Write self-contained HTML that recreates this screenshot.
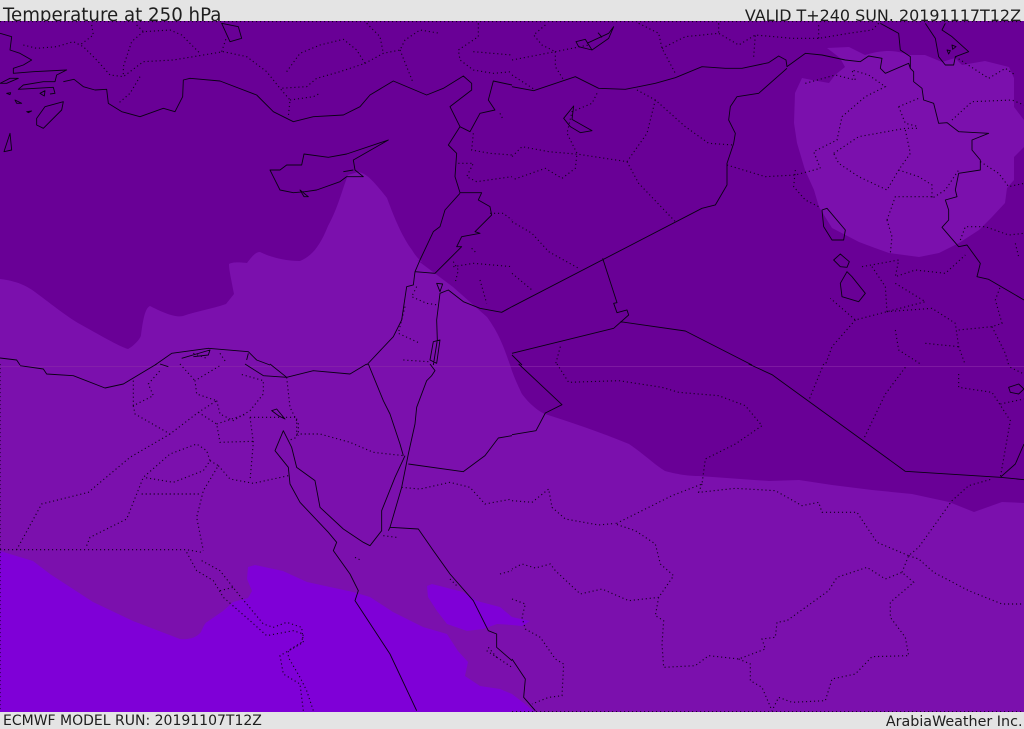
<!DOCTYPE html>
<html><head><meta charset="utf-8"><style>
html,body{margin:0;padding:0;background:#e4e4e4}
#p{position:relative;width:1024px;height:729px;overflow:hidden;background:#e4e4e4;font-family:"DejaVu Sans",sans-serif;color:#1e1e1e}
.t{position:absolute;white-space:nowrap;line-height:1}
svg{position:absolute;left:0;top:21px}
.s{fill:none;stroke:#0a0014;stroke-width:2.7;stroke-linejoin:round}
.d{fill:none;stroke:#14001f;stroke-width:3.4;stroke-dasharray:3.4 8.6;stroke-linecap:butt}
</style></head><body><div id="p">
<div class="t" style="left:3px;top:7px;font-size:18.2px">Temperature at 250 hPa</div>
<div class="t" style="right:3px;top:8px;font-size:15.95px">VALID T+240 SUN. 20191117T12Z</div>
<div class="t" style="left:3px;top:714px;font-size:14px">ECMWF MODEL RUN: 20191107T12Z</div>
<div class="t" style="right:1.500px;top:715px;font-size:14.3px">ArabiaWeather Inc.</div>
<svg width="1024" height="691" viewBox="0 21 1024 691">
<rect x="0" y="21" width="1024" height="691" fill="#7b10ad"/>
<path fill="#690096" d="M0 279C17 281 27 286 35 292C55 307 65 315 78 323C100 335 118 346 128 349C134 346 141 338 141 335C143 320 145 308 150 306C162 312 175 318 183 316C197 311 212 309 226 304L234 294C231 278 229 270 229 264C233 261 247 263 247 263C253 255 256 252 260 252C270 257 285 261 300 261C312 256 320 246 328 226C338 208 342 190 348 175L358 172C367 173 375 183 387 198C395 220 403 238 412 250C420 264 430 265 417 260L453 287L487 317C500 335 505 350 512 371C516 382 522 394 522 394C530 405 540 412 545 414C570 422 600 432 629 444C645 455 655 465 665 471C680 475 690 476 699 476L769 481L799 480L832 485L872 490L912 494L949 502L974 512L1002 502L1024 503V21H0Z"/>
<path fill="#7b10ad" d="M827 48L849 47L865 55C875 52 882 51 889 51C897 51 903 53 910 55L925 55L942 62L955 58L962 65L985 61L1009 67L1014 78L1014 107L1024 120V147L1014 157V180L1007 188L1005 203L992 217L979 230L959 243L939 253L919 257L889 253L875 248L859 242L832 228L819 207L814 190L805 170L797 143L794 123L795 93L802 78L812 80L829 83L835 75L845 67L840 58Z"/>
<path fill="#7f00d7" d="M0 551L33 561L50 574L93 602L133 621L180 639C190 640 197 637 201 632C205 622 207 622 207 622L223 611L233 602L248 598L252 591L247 579L248 567L255 565L283 571L307 582L353 592L370 597L393 612L423 627L447 634L458 651L468 662L465 676L480 686L500 689L512 694L525 704L535 712H0Z"/>
<path fill="#7f00d7" d="M427 586L432 584L463 592L477 601L500 607L512 617L530 621L522 626L512 625L497 624L483 629L467 631L447 624L437 611L428 597Z"/>
<rect x="0" y="366" width="1024" height="1" fill="#8a2aa8" opacity=".6"/>

<!-- top-left quadrant, zoom coordinates -->
<g transform="scale(.33333)">
<path class="d" d="M70 135L110 145L170 140L220 125L250 140L290 180L330 225L370 230L430 185L520 180L580 170L670 155L740 170L800 215L840 265L870 300L865 350M275 75L280 105L240 135M410 75L430 95L510 90L545 105L600 160M430 95L395 125L370 200L370 230M420 230L390 280L355 310M665 155L680 110M860 215L900 160L960 135L1030 118L1070 150L1095 190L1020 215L950 235L920 260L840 265M1095 190L1150 160L1200 150L1215 120L1260 90L1320 100M1200 150L1240 250M1100 70L1140 110L1150 160M870 300L940 290L960 280M1435 70L1435 110L1375 150L1380 180L1420 210L1480 220L1536 215M1420 155L1536 165M1500 340L1510 360M1420 400L1415 450L1470 460L1536 465M1375 490L1420 490L1400 530L1430 545L1536 530M1470 640L1510 640L1536 660M1415 745L1430 760M1360 785L1375 810L1365 850M1360 800L1420 790L1536 800M1440 840L1460 910M1250 860L1235 890L1280 910L1315 915M1215 920L1195 1000L1260 1030M1210 1080L1285 1085M660 1060L680 1090M580 1060L620 1075"/>
<path class="s" d="M0 100L35 110L30 150L60 160L95 180L70 195L40 205L40 220L100 215L200 210L170 225L165 245L130 245L70 255L55 268L160 262L165 280L150 282M0 250L30 235L55 235L20 250ZM20 280L32 278L30 284ZM45 300L65 310L50 310ZM80 335L95 333L85 338ZM120 280L135 272L133 288ZM110 355L135 320L190 305L185 330L130 385L110 375ZM12 455L30 400L35 450ZM190 245L222 238L250 260L285 270L320 268L325 310L365 335L420 350L490 325L525 335L548 290L550 240L570 235L660 243L770 285L820 335L880 365L940 350L1030 345L1080 320L1110 285L1180 243L1280 285L1330 265L1390 228L1415 250L1415 270L1350 320L1380 380L1410 395L1440 340L1485 330L1465 300L1480 243L1536 255M1380 380L1345 435L1370 460L1365 530L1380 578L1445 578L1435 600L1470 620L1475 645L1425 695L1440 700L1385 710L1370 740L1385 740L1345 780L1305 820L1245 815L1240 855L1220 860L1205 960L1180 1010L1100 1095M1380 580L1335 630L1320 680L1300 695L1260 780L1245 815M810 510L840 510L860 495L905 495L912 462L985 472L1040 462L1165 420L1060 480L1065 510L1090 530L1040 530L1020 545L950 570L915 575L880 578L840 570L820 530ZM1030 515L1060 510M900 570L925 590L912 590ZM1536 920L1505 937L1440 925L1390 905L1345 870L1320 880L1310 960L1312 1020L1300 1095M1300 1025L1320 1020L1310 1090L1290 1080ZM1310 850L1328 852L1320 875ZM0 1074L50 1080L60 1095M465 1095L515 1060L625 1045L745 1055L770 1080L810 1095M545 1075L630 1050L625 1065L580 1070M745 1060L740 1080M665 70L715 80L725 115L690 125Z"/>
</g>

<!-- top-right quadrant -->
<g transform="translate(512 0) scale(.33333)">
<path class="d" d="M100 75L65 105L90 135L130 155M0 180L130 155L230 135M130 155L130 200L155 240M380 70L440 100L450 145L490 220M450 145L520 110L620 100L680 135L730 105L840 115L920 115L1010 100L1080 90L1100 70M620 70L620 100M725 170L730 105M920 115L920 70M0 225L70 270M375 270L430 300L520 380L590 430L665 435M430 300L405 400L345 485L200 463L110 455L30 440L0 470M255 280L240 310L180 335L165 400L195 460L190 505L150 535L100 505L0 540M345 485L380 550L490 665M0 665L60 700L110 755L200 805M0 820L60 870M645 495L760 530L850 525L925 505M850 510L845 560L880 600L920 620M880 250L970 225L1030 240L1020 210L1070 225L1120 260L1060 290L990 350L975 420L905 455L925 505M965 460L1040 410L1180 385L1220 385M1180 390L1195 460L1160 510L1125 570L1040 530L980 490L965 460M1160 320L1220 295M1160 320L1180 370L1220 380M1160 510L1220 530L1260 555L1260 595L1300 570L1340 510M1125 660L1150 590L1260 590M1125 660L1140 710L1135 760M1320 360L1380 305L1500 300L1536 315M1330 170L1430 235L1480 205L1510 225M1405 485L1460 520L1490 560L1536 550M1345 720L1360 680L1420 680L1490 705L1536 700M1050 800L1160 780L1150 830L1210 810L1300 820L1360 765M1150 850L1240 905L1125 935L1030 960L955 895M1125 935L1260 925L1330 970L1340 1040L1360 1095M1080 800L1120 860L1125 935M1340 990L1440 980L1470 970L1450 900L1465 860M1440 980L1480 1060L1490 1095M1150 990L1160 1050L1230 1095M1240 1030L1340 1040M1030 960L960 1040L940 1095M145 1040L130 1095M1510 730L1520 770"/>
<path class="s" d="M0 260L65 272L190 230L260 265L340 268L430 250L490 233L570 200L640 205L690 205L770 188L800 168L822 180L825 200L880 160L930 165L1000 180L1045 185L1070 168L1110 175L1105 205L1120 220L1190 190L1195 205L1205 215L1205 245L1230 265L1235 300L1265 310L1280 370L1305 368L1340 395L1430 400L1380 420L1380 450L1405 480L1405 510L1340 520L1330 570L1335 590L1300 600L1310 630L1310 660L1290 682L1340 740L1365 735L1405 790L1395 830L1430 838L1536 900M1105 70L1160 100L1165 150L1195 170L1195 205M1240 70L1270 115L1280 170L1300 195L1325 195L1330 170L1370 155L1320 110L1290 90L1300 70M1305 150L1315 152L1310 162ZM1320 135L1332 140L1322 148ZM825 205L740 280L675 290L655 320L650 360L670 400L665 430L645 490L645 555L610 615L570 625L0 920M0 1060L305 985L350 945L345 930L315 938L305 910L315 908L272 775M325 965L520 993L720 1095M0 1065L30 1095M192 125L220 118L240 150L200 140ZM225 130L290 100L305 80L290 115L240 150M258 98L270 112M185 318L155 355L175 380L205 398L240 392L215 378L180 358ZM930 630L945 625L1000 690L995 720L960 720L935 680ZM965 780L985 762L1012 785L1005 802L985 800ZM1005 815L985 850L990 890L1040 905L1060 880L1020 830Z"/>
</g>

<!-- bottom-left quadrant -->
<g transform="translate(0 364) scale(.33333)">
<path class="d" d="M0 0L0 1040M0 557L560 557L605 565M400 50L400 125L460 95L445 60L480 20M400 125L405 150L510 210L595 145L650 110L590 90L585 50L660 5M540 0L585 50M510 210L390 280L265 385L125 420L50 557M650 110L660 150L700 170L750 140L790 90L790 50L720 30M750 160L890 160L890 220L865 230M750 160L760 235L750 350M890 210L960 210L1050 235L1120 265L1210 275M595 145L650 180L660 235L760 232M650 180L740 150M860 40L870 130L895 180L895 215M260 545L270 520L380 465L430 340L510 270L590 240L620 260L630 290L610 320L520 355L430 340M425 390L600 390M630 290L655 305L610 380L590 460L610 560M655 305L690 345L760 358L865 335M560 565L590 620L640 650L670 700L750 770L800 815L880 800L910 810L905 835L865 860L865 880L900 940L920 980L940 1040M605 590L660 620L715 690L790 780L820 790L860 775L905 790L910 835L840 875L850 930L900 960L910 1040M660 680L700 670M1205 370L1260 375L1350 355L1410 370L1455 420L1536 405M1150 515L1190 520M1065 580L1085 590M1500 630L1536 620M1350 645L1375 670M1460 860L1536 910M1465 850L1490 880"/>
<path class="s" d="M60 5L130 15L140 30L220 35L315 72L370 60L470 0M810 0L860 40M735 0L790 35L860 40L940 20L1050 30L1100 0M1105 0L1150 110L1170 150L1200 240L1210 275M1290 0L1305 20L1295 35L1280 50L1250 130L1245 180L1225 270L1205 370L1170 490L1165 500M1215 275L1185 340L1145 440L1145 500L1110 545L1090 535L1030 495L960 430L945 350L890 310L875 250L850 200L825 260L865 310L870 360L900 415L985 505L1010 535L1000 560L1050 630L1075 680L1065 710L1170 870L1250 1040M1170 490L1255 495L1300 560L1350 630L1420 710L1465 800L1490 810L1490 850L1536 890M1225 300L1390 323L1455 275L1495 222L1536 215M815 140L830 135L855 165L835 155ZM480 0L505 8"/>
</g>

<!-- bottom-right quadrant -->
<g transform="translate(512 364) scale(.33333)">
<path class="d" d="M135 0L170 55L320 50L450 70L500 85L620 95L700 125L750 185L670 240L580 285L570 360L480 395L310 480L370 500L430 540L445 600L485 635L440 700L350 710L270 675L205 690L130 620L115 600L70 612L30 600L0 615M0 410L60 415L110 375L120 430L160 465L260 483L310 478M0 705L40 720L30 760L40 795L85 820L130 885L155 900L150 995L110 1000L60 1020M570 360L560 385L670 373L790 380L870 425L920 415L930 445L1035 445L1095 535L1190 575M440 700L430 755L455 770L450 840L455 910L550 905L590 875L680 885L760 855L750 825L790 820L795 775L825 770L950 680L975 640L1065 610L1120 645L1170 625L1205 655L1135 715L1135 760L1180 820L1190 875L1080 878L1030 930L960 945L940 1010L840 1015L800 1000L780 1040M680 885L715 900L715 950L750 970L780 1040M1190 575L1220 585L1265 625L1370 680L1470 720L1536 720M1170 625L1190 575L1220 550L1320 410L1370 365L1440 345M935 0L890 110M1180 10L1120 90L1055 225M1340 30L1340 70L1440 85L1495 170L1465 340M1465 120L1536 105M1495 10L1536 30M0 1043L1536 1043"/>
<path class="s" d="M0 212L72 200L100 147L150 122L20 0M710 0L780 32L1180 322L1465 340L1536 347M1465 340L1510 300L1536 240M0 885L40 945L35 1000L70 1040M1490 70L1520 60L1536 75L1520 90L1495 85Z"/>
</g>
<path class="d" transform="scale(.33333)" d="M0 64.500L3072 64.500"/>
</svg>
</div></body></html>
